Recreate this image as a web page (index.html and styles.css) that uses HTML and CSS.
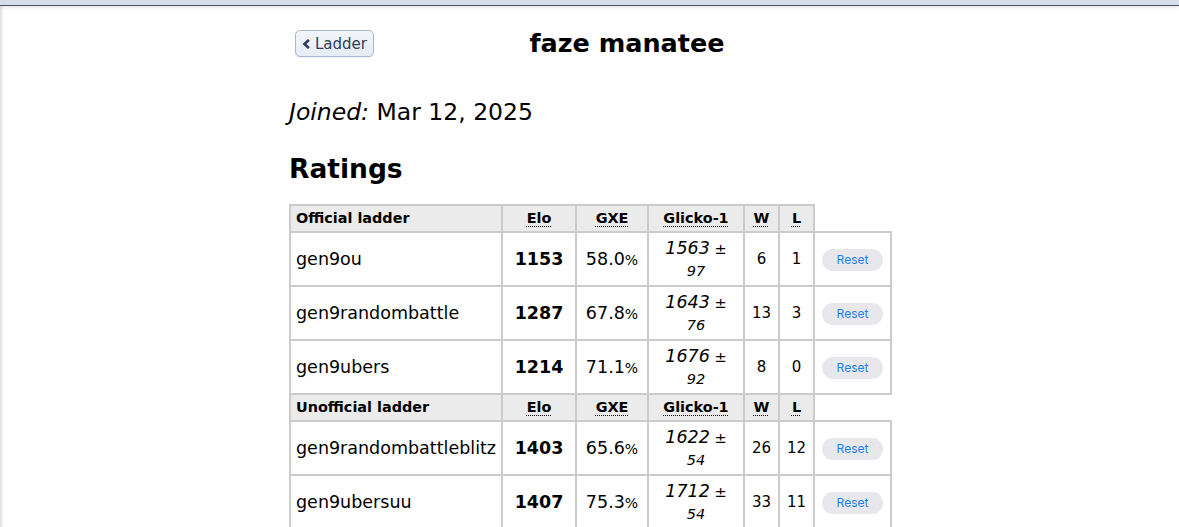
FILE: index.html
```html
<!DOCTYPE html>
<html>
<head>
<meta charset="utf-8">
<title>faze manatee</title>
<link rel="stylesheet" href="styles.css">
</head>
<body>
<div class="topbar"></div>
<div class="page">
  <div class="content">
    <div class="header">
      <a class="back-btn" href="#"><svg class="chev" viewBox="0 0 10 12" width="9" height="12"><path d="M7.6 1.4 L2.8 6 L7.6 10.6" fill="none" stroke="currentColor" stroke-width="3" stroke-linejoin="miter"/></svg>Ladder</a>
      <h1 class="title">faze manatee</h1>
    </div>
    <p class="joined"><em>Joined:</em> Mar 12, 2025</p>
    <h2 class="section-title">Ratings</h2>
    <table class="ratings">
      <colgroup>
        <col class="c-name"><col class="c-elo"><col class="c-gxe"><col class="c-glicko"><col class="c-w"><col class="c-l"><col class="c-reset">
      </colgroup>
      <tr class="head">
        <th class="left">Official ladder</th>
        <th><abbr>Elo</abbr></th>
        <th><abbr>GXE</abbr></th>
        <th><abbr>Glicko-1</abbr></th>
        <th><abbr>W</abbr></th>
        <th><abbr>L</abbr></th>
      </tr>
      <tr>
        <td class="name">gen9ou</td>
        <td class="elo">1153</td>
        <td class="gxe">58.0<small>%</small></td>
        <td class="glicko"><em>1563<small> ± 97</small></em></td>
        <td class="num">6</td>
        <td class="num">1</td>
        <td class="act"><button class="reset">Reset</button></td>
      </tr>
      <tr>
        <td class="name">gen9randombattle</td>
        <td class="elo">1287</td>
        <td class="gxe">67.8<small>%</small></td>
        <td class="glicko"><em>1643<small> ± 76</small></em></td>
        <td class="num">13</td>
        <td class="num">3</td>
        <td class="act"><button class="reset">Reset</button></td>
      </tr>
      <tr>
        <td class="name">gen9ubers</td>
        <td class="elo">1214</td>
        <td class="gxe">71.1<small>%</small></td>
        <td class="glicko"><em>1676<small> ± 92</small></em></td>
        <td class="num">8</td>
        <td class="num">0</td>
        <td class="act"><button class="reset">Reset</button></td>
      </tr>
      <tr class="head">
        <th class="left">Unofficial ladder</th>
        <th><abbr>Elo</abbr></th>
        <th><abbr>GXE</abbr></th>
        <th><abbr>Glicko-1</abbr></th>
        <th><abbr>W</abbr></th>
        <th><abbr>L</abbr></th>
      </tr>
      <tr>
        <td class="name">gen9randombattleblitz</td>
        <td class="elo">1403</td>
        <td class="gxe">65.6<small>%</small></td>
        <td class="glicko"><em>1622<small> ± 54</small></em></td>
        <td class="num">26</td>
        <td class="num">12</td>
        <td class="act"><button class="reset">Reset</button></td>
      </tr>
      <tr>
        <td class="name">gen9ubersuu</td>
        <td class="elo">1407</td>
        <td class="gxe">75.3<small>%</small></td>
        <td class="glicko"><em>1712<small> ± 54</small></em></td>
        <td class="num">33</td>
        <td class="num">11</td>
        <td class="act"><button class="reset">Reset</button></td>
      </tr>
    </table>
  </div>
</div>
</body>
</html>
```

FILE: styles.css
```css
html, body {
  margin: 0;
  padding: 0;
  background: #fff;
}
body {
  font-family: "DejaVu Sans", Verdana, sans-serif;
  color: #000;
}
.topbar {
  height: 5px;
  background: #d6dce8;
  border-bottom: 1px solid #48536e;
  box-shadow: 0 1px 4px rgba(0, 0, 0, 0.12);
  position: relative;
  z-index: 1;
}
.page {
  min-height: 600px;
  box-shadow: inset 3px 0 3px -1px rgba(0, 0, 0, 0.13);
}
.content {
  width: 601px;
  margin: 0 auto;
  padding-top: 24px;
}
.header {
  display: flex;
  align-items: flex-start;
}
.back-btn {
  display: flex;
  align-items: center;
  gap: 4px;
  margin-left: 6px;
  height: 25px;
  padding: 0 6px 0 6px;
  border: 1px solid #a8b6cf;
  border-radius: 5px;
  background: linear-gradient(#f2f5fa, #e6ecf5);
  color: #2f3d5a;
  font-size: 15px;
  text-decoration: none;
  box-shadow: 0 1px 1px rgba(0,0,0,0.06);
}
.chev {
  display: block;
}
.title {
  flex: 1;
  margin: 0;
  padding-right: 10px;
  text-align: center;
  font-size: 25.5px;
  font-weight: bold;
  line-height: 26px;
}
.joined {
  margin: 42px 0 0;
  font-size: 23.5px;
  line-height: 26px;
}
.joined em {
  font-style: italic;
}
.section-title {
  margin: 29px 0 0;
  font-size: 26.5px;
  line-height: 30px;
  font-weight: bold;
}
.ratings {
  margin-top: 20px;
  width: 601px;
  table-layout: fixed;
  border-collapse: collapse;
}
.c-name { width: 212px; }
.c-elo { width: 74px; }
.c-gxe { width: 72px; }
.c-glicko { width: 96px; }
.c-w { width: 35px; }
.c-l { width: 35px; }
.c-reset { width: 77px; }
.ratings th, .ratings td {
  border: 2px solid #cbcbcb;
}
.ratings th {
  background: #ebebeb;
  font-size: 14.4px;
  font-weight: bold;
  height: 21px;
  padding: 2px 2px;
  text-align: center;
  line-height: 17px;
  white-space: nowrap;
}
.ratings th.left {
  text-align: left;
  padding-left: 5px;
}
abbr {
  text-decoration: underline dotted;
  text-underline-offset: 3px;
  text-decoration-thickness: 1px;
}
.ratings td {
  font-size: 17.5px;
  line-height: 22px;
  padding: 4px 5px;
  height: 44px;
  text-align: center;
}
.ratings td.name {
  text-align: left;
}
.ratings td.elo {
  font-weight: bold;
}
.ratings td.num {
  font-size: 15px;
  padding: 4px 2px;
}
.ratings td.gxe small {
  font-size: 14px;
  line-height: 1;
}
.ratings td.glicko {
  padding: 4px 12px;
}
.ratings td.glicko small {
  font-size: 14.5px;
  line-height: 1;
}
.ratings td.act {
  padding: 0;
}
.reset {
  font-family: "Inter", "Liberation Sans", sans-serif;
  font-size: 12px;
  color: #1e7ff0;
  background: #e8e8ec;
  border: none;
  border-radius: 11px;
  width: 61px;
  height: 22px;
  padding: 0;
}
```
